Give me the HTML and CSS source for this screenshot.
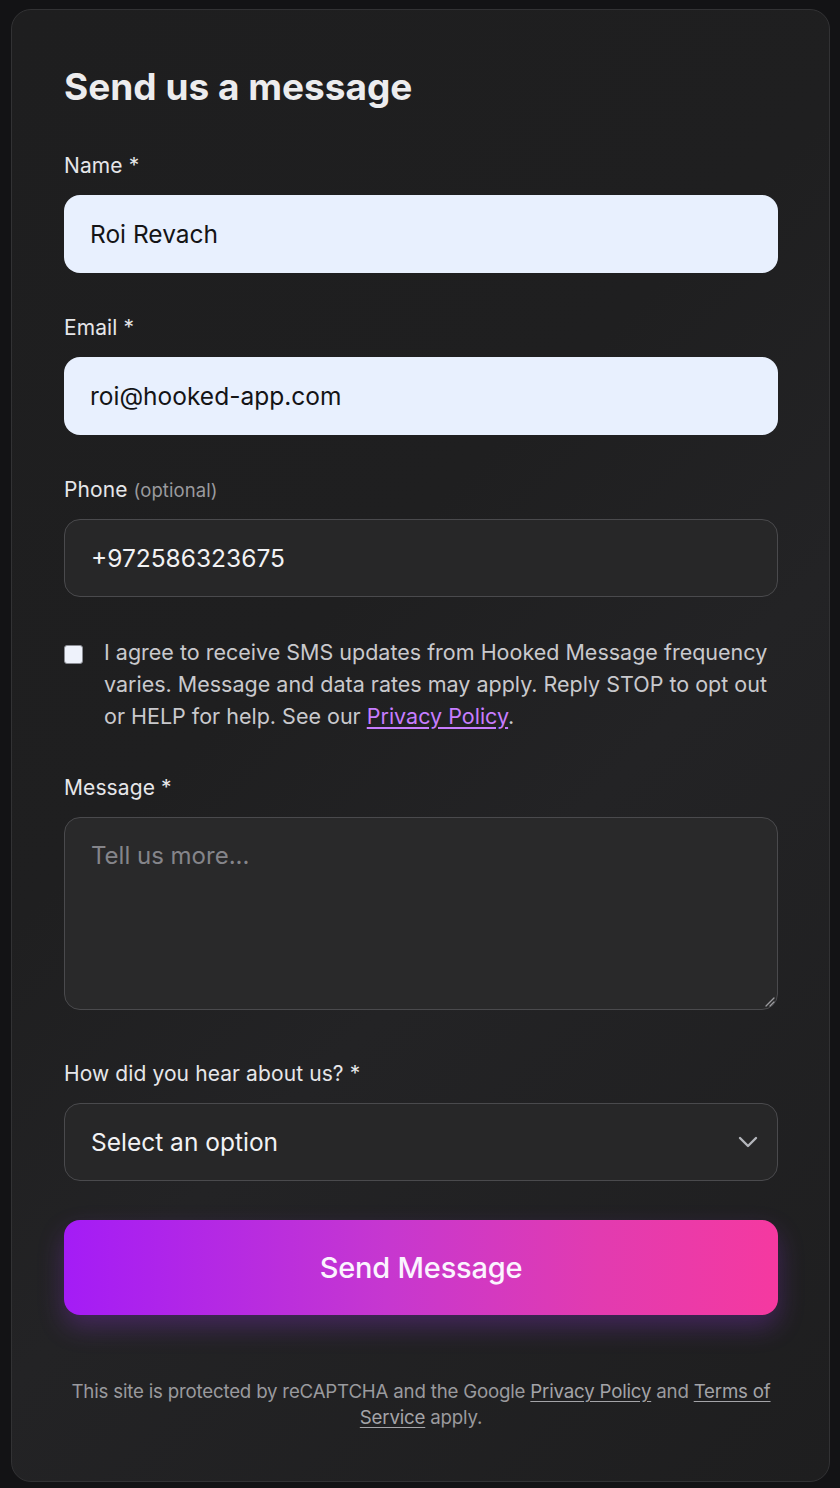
FILE: index.html
```html
<!DOCTYPE html>
<html lang="en">
<head>
<meta charset="utf-8">
<title>Send us a message</title>
<link rel="stylesheet" href="styles.css">
</head>
<body>
<form class="card">
  <h2 class="title">Send us a message</h2>

  <div class="field">
    <label class="label">Name *</label>
    <div class="input autofill">Roi Revach</div>
  </div>

  <div class="field">
    <label class="label">Email *</label>
    <div class="input autofill">roi@hooked-app.com</div>
  </div>

  <div class="field">
    <label class="label">Phone <span class="optional">(optional)</span></label>
    <div class="input dark">+972586323675</div>
  </div>

  <div class="consent">
    <span class="checkbox"></span>
    <p class="consent-text">I agree to receive SMS updates from Hooked Message frequency varies. Message and data rates may apply. Reply STOP to opt out or HELP for help. See our <a class="link-purple" href="#">Privacy Policy</a>.</p>
  </div>

  <div class="field field-message">
    <label class="label">Message *</label>
    <div class="textarea">
      <span class="placeholder">Tell us more...</span>
      <svg class="grip" width="12" height="12" viewBox="0 0 12 12"><path d="M11 3 L3 11 M11 7 L7 11" stroke="#9a9a9e" stroke-width="1.3" fill="none" stroke-linecap="round"/></svg>
    </div>
  </div>

  <div class="field field-select">
    <label class="label">How did you hear about us? *</label>
    <div class="input dark select">
      <span>Select an option</span>
      <svg class="chev" width="20" height="12" viewBox="0 0 20 12"><path d="M2 2 L10 10 L18 2" stroke="#b4b6bc" stroke-width="2.4" fill="none" stroke-linecap="round" stroke-linejoin="round"/></svg>
    </div>
  </div>

  <button type="button" class="submit">Send Message</button>

  <p class="footnote">This site is protected by reCAPTCHA and the Google <a href="#">Privacy Policy</a> and <a href="#">Terms of Service</a> apply.</p>
</form>
</body>
</html>
```

FILE: styles.css
```css
* { box-sizing: border-box; }
html, body { margin: 0; padding: 0; }
body {
  background: #131315;
  font-family: "Inter", "Noto Sans", sans-serif;
  width: 840px;
  height: 1488px;
  overflow: hidden;
}
.card {
  margin: 9px 10px 0 11px;
  height: 1473px;
  border: 1px solid #323234;
  border-radius: 20px;
  background: linear-gradient(135deg, #1e1e1f 0%, #1f1f20 40%, #232325 60%, #1e1e1f 100%);
  padding: 54px 51px 0 52px;
  display: flex;
  flex-direction: column;
}
.title {
  margin: 0 0 42px;
  font-size: 37px;
  line-height: 46px;
  font-weight: 700;
  color: #ececee;
  letter-spacing: 0;
}
.field {
  display: flex;
  flex-direction: column;
  gap: 15px;
  margin-bottom: 41px;
}
.label {
  font-size: 21px;
  line-height: 28px;
  color: #e6e6e9;
  font-weight: 400;
  letter-spacing: 0.1px;
}
.optional {
  font-size: 18.5px;
  color: #9a9a9e;
  font-weight: 400;
}
.input {
  height: 78px;
  border-radius: 16px;
  padding: 0 26px;
  display: flex;
  align-items: center;
  font-size: 24.5px;
  letter-spacing: 0;
}
.autofill {
  background: #e8f0fe;
  color: #141416;
}
.dark {
  background: #272728;
  border: 1px solid #4a4a4d;
  color: #f2f2f4;
}
.consent {
  display: flex;
  align-items: flex-start;
  gap: 21px;
  margin-top: -2px;
  margin-bottom: 42px;
}
.checkbox {
  flex: none;
  width: 19px;
  height: 19px;
  margin-top: 9px;
  border-radius: 3px;
  background: #eef2fb;
  border: 1px solid #8b8d94;
}
.consent-text {
  margin: 0;
  font-size: 21.5px;
  line-height: 32px;
  color: #c9c9cd;
  letter-spacing: 0;
}
.link-purple {
  color: #c77dff;
  text-decoration: underline;
  text-underline-offset: 3px;
}
.field-message { margin-bottom: 50px; }
.textarea {
  position: relative;
  height: 193px;
  border-radius: 16px;
  border: 1px solid #4a4a4d;
  background: #29292a;
  padding: 24px 26px;
}
.placeholder {
  font-size: 24px;
  color: #85858a;
  line-height: 28px;
}
.grip {
  position: absolute;
  right: 2px;
  bottom: 2px;
}
.field-select { margin-bottom: 39px; }
.select {
  justify-content: space-between;
  padding-right: 19px;
}
.submit {
  height: 95px;
  border: 0;
  border-radius: 16px;
  background: linear-gradient(90deg, #a41cf6 0%, #c637d0 45%, #e23bb0 75%, #f539a0 100%);
  color: #fbf4ff;
  font-family: inherit;
  font-size: 29px;
  font-weight: 500;
  letter-spacing: -0.2px;
  box-shadow: 0 12px 26px rgba(140, 50, 210, 0.32);
  margin-bottom: 64px;
}
.footnote {
  margin: 0;
  text-align: center;
  font-size: 18.7px;
  line-height: 26px;
  color: #9a9a9e;
  letter-spacing: -0.2px;
}
.footnote a { color: #a4a4a8; text-underline-offset: 3px; }
```
